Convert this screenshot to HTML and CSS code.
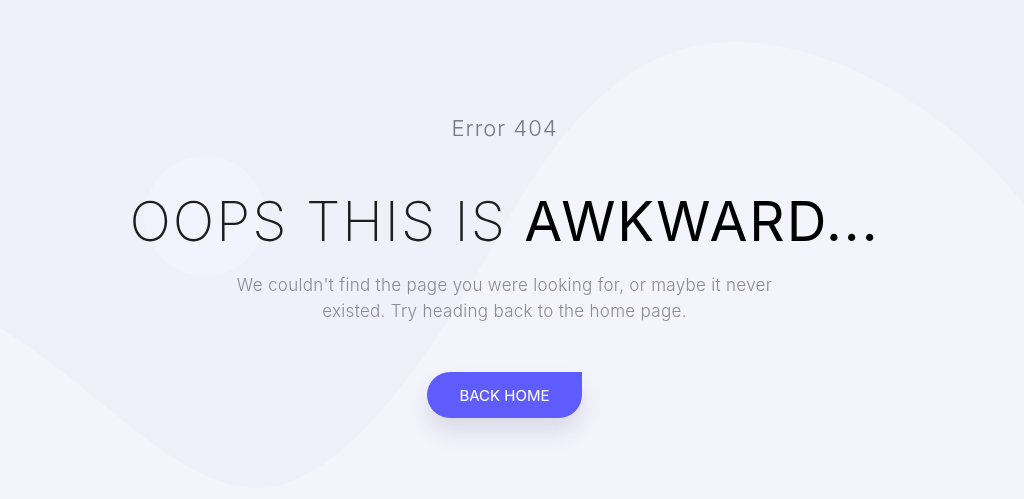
FILE: index.html
```html
<!DOCTYPE html>
<html lang="en">
<head>
<meta charset="UTF-8">
<meta name="viewport" content="width=device-width, initial-scale=1.0">
<title>Error 404</title>
<link rel="stylesheet" href="styles.css">
</head>
<body>
<div class="backdrop">
    <svg viewBox="0 0 1024 499" preserveAspectRatio="none" width="100%" height="100%">
        <path class="blob" d="M0,0 L1024,0 L1024,205 C960,120 840,40 730,42 C630,45 565,120 505,225 C430,360 340,490 255,488 C175,486 95,385 0,328 Z"/>
        <circle class="dot" cx="205" cy="216" r="60"/>
    </svg>
</div>

<main class="page">
    <p class="code">Error 404</p>
    <h1 class="title">OOPS THIS IS <strong>AWKWARD...</strong></h1>
    <p class="desc">We couldn't find the page you were looking for, or maybe it never existed. Try heading back to the home page.</p>
    <a class="btn" href="#">BACK HOME</a>
</main>
</body>
</html>
```

FILE: styles.css
```css
* {
    box-sizing: border-box;
}

body {
    margin: 0;
    min-height: 100vh;
    font-family: 'Inter', 'Open Sans', sans-serif;
    background: #f4f4fd;
    color: #222;
    overflow: hidden;
}

.backdrop {
    position: fixed;
    inset: 0;
    z-index: 0;
}

.backdrop svg {
    display: block;
}

.blob {
    fill: #f0f0fa;
}

.dot {
    fill: #f3f3fd;
}

.page {
    position: relative;
    z-index: 1;
    display: flex;
    flex-direction: column;
    align-items: center;
    text-align: center;
    padding: 115px 15px 0 0;
}

.code {
    margin: 0;
    font-size: 22px;
    line-height: 26px;
    font-weight: 300;
    letter-spacing: 1px;
    color: #7a7a84;
}

.title {
    margin: 47px 0 0;
    font-size: 55px;
    line-height: 66px;
    font-weight: 200;
    color: #1e1e1e;
    letter-spacing: 2px;
}

.title strong {
    font-weight: 400;
    color: #000;
}

.desc {
    margin: 18px 0 0;
    max-width: 580px;
    font-size: 17px;
    line-height: 26px;
    font-weight: 300;
    letter-spacing: 0.3px;
    color: #8c8c96;
}

.btn {
    margin-top: 48px;
    width: 155px;
    height: 46px;
    display: flex;
    align-items: center;
    justify-content: center;
    background: #5f5cfd;
    color: #fff;
    text-decoration: none;
    font-size: 15px;
    font-weight: 400;
    border-radius: 23px 0 23px 23px;
    box-shadow: 0 14px 22px rgba(40, 40, 80, 0.12);
}
```
